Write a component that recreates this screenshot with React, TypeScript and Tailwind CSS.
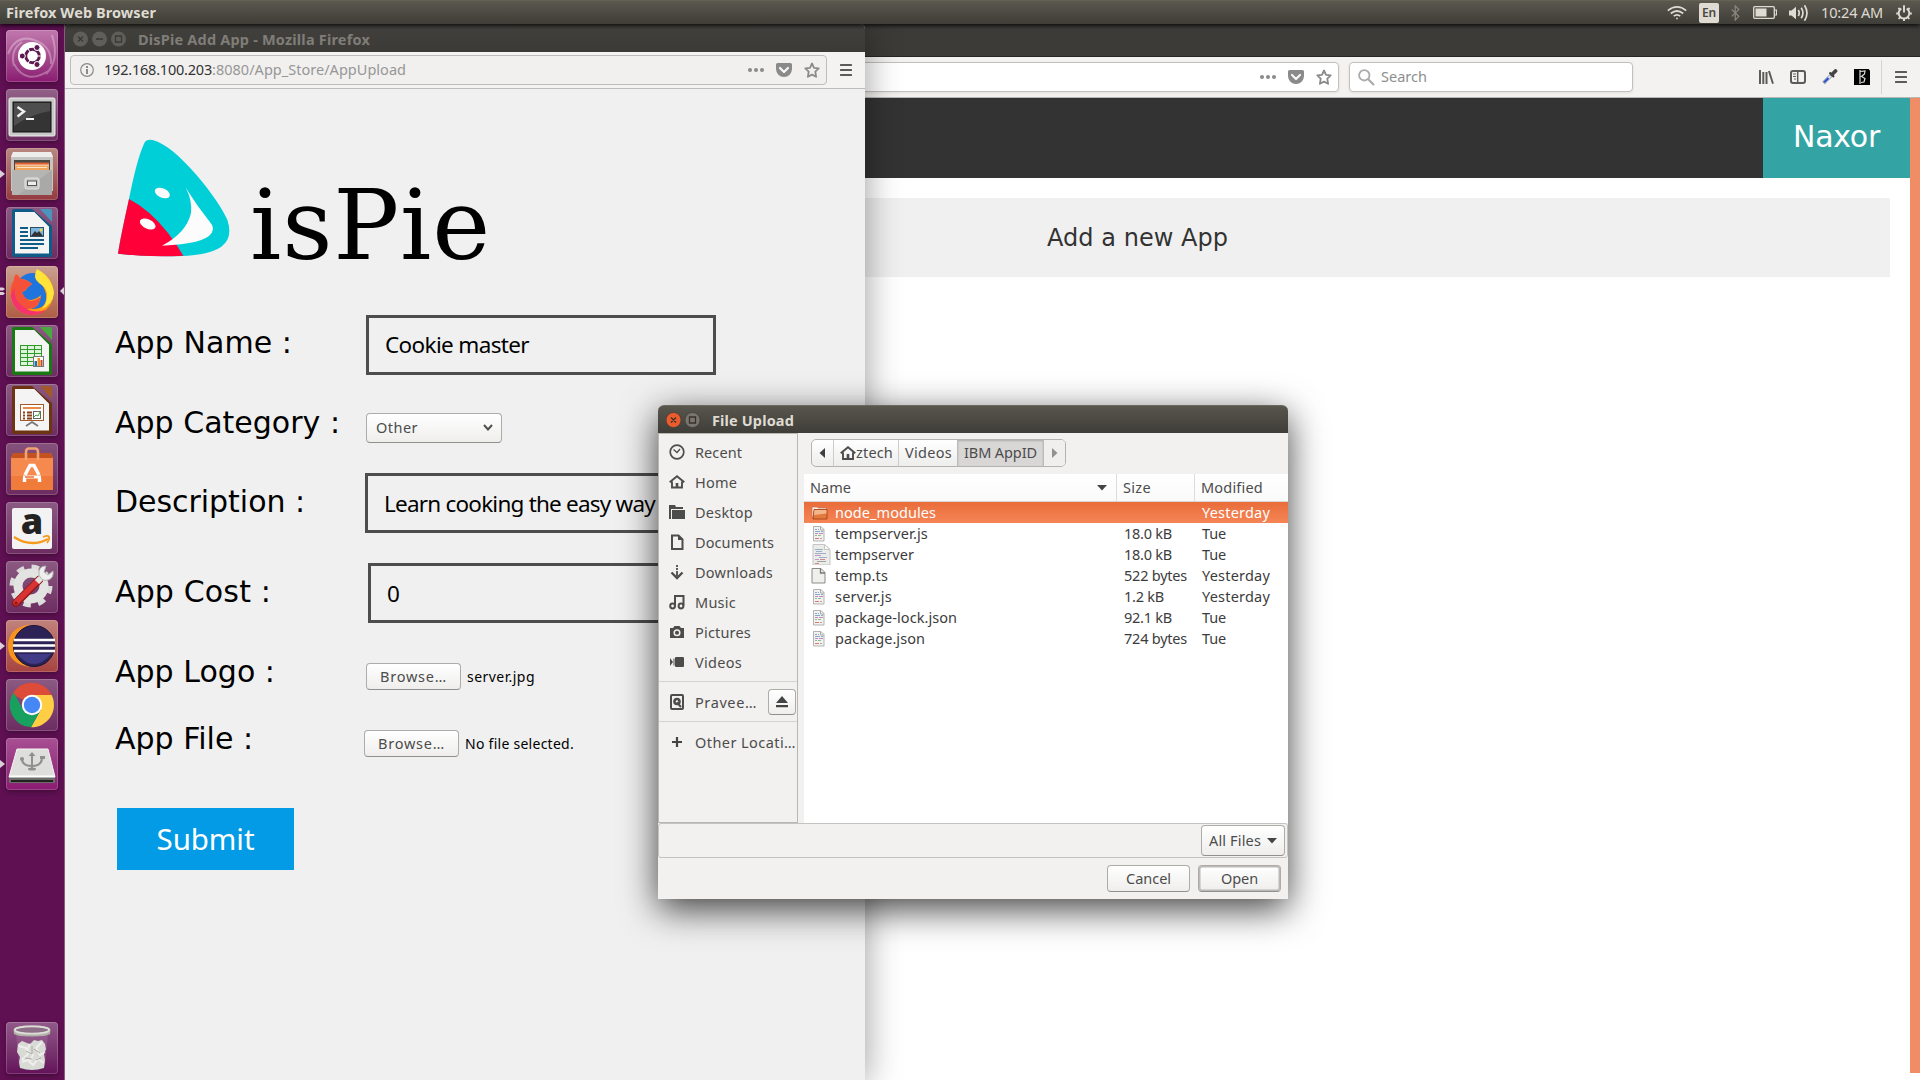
import { useLayoutEffect, useRef, useState } from "react";
import type { ReactNode } from "react";

/* Text run whose tracking is adjusted so that it occupies a given width. */
function T({ w, className = "", children }: { w: number; className?: string; children: string }) {
  const ref = useRef<HTMLSpanElement>(null);
  const [ls, setLs] = useState(0);
  useLayoutEffect(() => {
    if (ref.current) {
      const natural = ref.current.getBoundingClientRect().width;
      setLs((w - natural) / children.length);
    }
  }, []);
  return (
    <span ref={ref} className={`inline-block shrink-0 whitespace-pre ${className}`} style={{ letterSpacing: ls }}>
      {children}
    </span>
  );
}

/* ---------- small glyphs ---------- */

const Dots = ({ c = "#8a8a8a" }: { c?: string }) => (
  <svg width="16" height="16" viewBox="0 0 16 16" fill={c}>
    <circle cx="2" cy="8" r="2" /><circle cx="8" cy="8" r="2" /><circle cx="14" cy="8" r="2" />
  </svg>
);
const Pocket = () => (
  <svg width="16" height="16" viewBox="0 0 16 16">
    <path d="M1.500 1h13a1.500 1.500 0 0 1 1.500 1.500V7a8 8 0 0 1-16 0V2.500A1.500 1.500 0 0 1 1.500 1z" fill="#8a8a8a" />
    <path d="M4 6l4 4 4-4" fill="none" stroke="#f6f6f6" strokeWidth="2.200" strokeLinecap="round" strokeLinejoin="round" />
  </svg>
);
const Star = () => (
  <svg width="16" height="16" viewBox="0 0 16 16">
    <path d="M8 1.500l2 4.300 4.700.5-3.400 3.300.8 5.200L8 12.600l-4.100 2.200.8-5.200L1.300 6.300 6 5.800z" fill="none" stroke="#8a8a8a" strokeWidth="1.800" strokeLinejoin="round" />
  </svg>
);
const Burger = () => (
  <svg width="12" height="12" viewBox="0 0 12 12" fill="#5c5b59">
    <rect width="12" height="2" rx=".6" /><rect y="5" width="12" height="2" rx=".6" /><rect y="10" width="12" height="2" rx=".6" />
  </svg>
);
const HomeIcon = () => (
  <svg width="16" height="14" viewBox="0 0 16 14">
    <path d="M.7 7.200L8 1.200l7.300 6M3 6.500v6.500h10V6.500" fill="none" stroke="#4c4c4c" strokeWidth="1.900" />
    <path d="M6.700 8h2.600v5H6.700z" fill="#4c4c4c" />
  </svg>
);

/* ---------- panel ---------- */

function Panel() {
  return (
    <header className="relative z-20 flex h-6 items-center border-t border-[#656253] bg-linear-to-b from-[#5b584f] to-[#3e3d37] pl-[6px] text-[#dfdbd2] shadow-[0_2px_4px_rgba(0,0,0,0.75)]">
      <T w={150} className="pb-px text-[14.500px] leading-[20px] font-bold">Firefox Web Browser</T>
      <div className="ml-auto flex h-full items-center">
        <svg width="20" height="14" viewBox="0 0 20 14" fill="none" stroke="#dfdbd2" strokeWidth="1.700">
          <path d="M.8 4.600Q10-2.800 19.200 4.600M3.800 7.500Q10 2.500 16.200 7.500M6.700 10.200Q10 7.600 13.300 10.200" />
          <circle cx="10" cy="12.400" r=".9" fill="#dfdbd2" stroke="none" />
        </svg>
        <div className="ml-3 flex h-5 w-5 items-center justify-center rounded-[2px] bg-[#dfdbd2] text-[12px] font-semibold text-[#4a4842]">
          <T w={14}>En</T>
        </div>
        <svg className="ml-3" width="9" height="16" viewBox="0 0 9 16" fill="none" stroke="#8b887e" strokeWidth="1.200">
          <path d="M.8 4.500l7 6.800-3.600 3.800V.9l3.600 3.700-7 6.800" />
        </svg>
        <svg className="ml-[13px]" width="24" height="13" viewBox="0 0 24 13">
          <rect x=".7" y=".7" width="20.600" height="11.600" rx="1" fill="none" stroke="#dfdbd2" strokeWidth="1.300" />
          <rect x="2.500" y="2.500" width="11" height="8" fill="#dfdbd2" />
          <path d="M21.500 4h2v5h-2" fill="none" stroke="#dfdbd2" strokeWidth="1.200" />
        </svg>
        <svg className="ml-3" width="20" height="18" viewBox="0 0 20 18" fill="none" stroke="#dfdbd2">
          <path d="M0 6.500h2.500L7 2.800v12.400L2.500 11.500H0z" fill="#dfdbd2" stroke="none" />
          <path d="M9.300 6q1.800 3 0 6M12.200 3.700q3.500 5.300 0 10.600M15.500 1.300q5 7.700 0 15.400" strokeWidth="1.700" />
        </svg>
        <T w={62} className="ml-[12px] pb-px text-[14.500px] leading-[20px]">10:24 AM</T>
        <svg className="mr-2 ml-[13px]" width="16" height="16" viewBox="0 0 16 16" fill="none" stroke="#dfdbd2">
          <path d="M5.300 3.600a5.300 5.300 0 1 0 5.400 0" strokeWidth="1.900" />
          <path d="M8 .3v7.200M.2 8.500H2.500M13.500 8.500h2.300M2.400 3l1.700 1.600M13.600 3l-1.700 1.600M2.600 13.900l1.600-1.600M13.400 13.900l-1.600-1.600M8 13.600V16" strokeWidth="1.900" />
        </svg>
      </div>
    </header>
  );
}

/* ---------- launcher ---------- */

const LibreDoc = ({ edge, light, children }: { edge: string; light: string; children: ReactNode }) => (
  <>
    <path d="M8 2h18l20 17v29q0 2-2 2H8q-2 0-2-2V4q0-2 2-2z" fill={edge} />
    <path d="M34 2h10q2 0 2 2v11z" fill={light} />
    <path d="M9 5h19l15 15v26.500H9z" fill="#f4f4f4" />
    <path d="M28 5l15 15" stroke="#cfcfcf" strokeWidth="1" />
    {children}
  </>
);

const icons: { bg: string; art: ReactNode; run?: 1 | 2 }[] = [
  {
    bg: "bg-linear-to-b from-[#c078ad] to-[#8a1a72]",
    art: (
      <>
        <path d="M2 24Q10 4 28 10q18 6 17 24M46 5Q54 30 40 44M44 40Q20 56 8 34M8 36Q4 20 16 12" fill="none" stroke="#fff" strokeOpacity=".3" strokeWidth="2" />
        <circle cx="26" cy="26" r="14" fill="#fff" />
        <circle cx="26.500" cy="26" r="6.800" fill="none" stroke="#5e1a50" strokeWidth="3" />
        <path d="M26.500 26H37M26.500 26L21 35M26.500 26L21 17" stroke="#fff" strokeWidth="1" />
        <circle cx="31" cy="17.500" r="3" fill="#5e1a50" stroke="#fff" /><circle cx="31" cy="34.500" r="3" fill="#5e1a50" stroke="#fff" /><circle cx="16.300" cy="26" r="3" fill="#5e1a50" stroke="#fff" />
      </>
    ),
  },
  {
    bg: "bg-linear-to-b from-[#916087] to-[#6d2c61]",
    art: (
      <>
        <rect x="3" y="9" width="46" height="38" rx="1.500" fill="#c9c9c9" stroke="#eee" />
        <rect x="7" y="13" width="38" height="30" fill="#343434" stroke="#111" />
        <path d="M8 14h36v8Q25 25 8 37z" fill="#fff" fillOpacity=".13" />
        <path d="M11.500 18l6.500 4.500-6.500 5" fill="none" stroke="#f2f2f2" strokeWidth="2.400" />
        <path d="M20 30h8" stroke="#f2f2f2" strokeWidth="2" />
      </>
    ),
  },
  {
    bg: "bg-linear-to-b from-[#b98781] to-[#933a40]",
    run: 1,
    art: (
      <>
        <path d="M7 4h38l2 5v34H5V9z" fill="#c4c4c2" />
        <path d="M7 4h38l2 5H5z" fill="#ededeb" />
        <rect x="8" y="12" width="36" height="10" fill="#4a4844" />
        <path d="M9 14.500h34v3H9z" fill="#df6030" /><path d="M9 17h34v5H9z" fill="#f1a55a" /><path d="M9 17h34M11 19.500h30" stroke="#fff" strokeOpacity=".7" />
        <path d="M6 22h40v25H6z" fill="#a9a9a7" /><path d="M6 22h40l-34 25H6z" fill="#fff" fillOpacity=".15" />
        <rect x="19" y="30" width="14" height="11" rx="2" fill="#c7c7c5" stroke="#e8e8e6" /><rect x="21.500" y="33" width="9" height="4.500" fill="#eee" stroke="#555" />
      </>
    ),
  },
  {
    bg: "bg-linear-to-b from-[#8b5a82] to-[#6d2c61]",
    art: (
      <LibreDoc edge="#0f5c88" light="#4a94bd">
        <path d="M14 21h8M14 25h8M14 29h8M14 33h24M14 37h24M14 41h18" stroke="#0f5c88" strokeWidth="2" />
        <rect x="24.500" y="20.500" width="13" height="9" fill="#7cb6dc" stroke="#2a4f68" /><path d="M25 29l4-5 2 2 2-2 4 5z" fill="#333" /><circle cx="35" cy="23" r="1.500" fill="#f4d14a" />
      </LibreDoc>
    ),
  },
  {
    bg: "bg-linear-to-b from-[#caa090] to-[#ae5d43]",
    run: 2,
    art: (
      <>
        <circle cx="27" cy="25" r="18" fill="#1f74dd" />
        <path d="M30 4q12 4 15 12 4 8 2 16-4 15-20 17Q9 49 5 32 3 22 8 14q0-4 2-6 3 2 5 5 5 0 11 5l-5 4q0 2-5 4 2 8 9 8 6-1 10-5-1 12-10 14 17 1 15-15-2-8-6-11-4-6-4-13z" fill="#ff9a12" />
        <path d="M8 14q0-4 2-6 3 2 5 5 5 0 11 5l-5 4q0 2-5 4 3 8 9 9 6-1 10-4-3 13-14 12 8 6 19 1-7 6-15 5Q9 47 5 32 3 22 8 14z" fill="#f5503a" />
        <path d="M5 30q3 18 20 19 9 0 15-5Q24 49 14 38 7 32 9 22q-3 3-4 8z" fill="#f2336d" />
        <path d="M31 3q-5 9 2 14 8 5 8 12 0 10-7 15 13-5 14-17Q46 11 31 3z" fill="#ffe23a" />
      </>
    ),
  },
  {
    bg: "bg-linear-to-b from-[#8b5a82] to-[#6d2c61]",
    art: (
      <LibreDoc edge="#1a7a12" light="#49a840">
        <path d="M14 20h22v21H14z" fill="#2e9a27" />
        <g fill="#dff3dc">
          {[0, 1, 2, 3, 4].map((r) => [0, 1, 2].map((c) => <rect key={`${r}${c}`} x={15 + c * 7} y={21 + r * 4} width="6" height="3" />))}
        </g>
        <rect x="27.500" y="31.500" width="10" height="10" fill="#fff" stroke="#777" /><path d="M28.500 36h2.500v5h-2.500z" fill="#1b72b8" /><path d="M31.500 33h2.500v8h-2.500z" fill="#f08c1d" /><path d="M34.500 35h2v6h-2z" fill="#c5481b" />
      </LibreDoc>
    ),
  },
  {
    bg: "bg-linear-to-b from-[#8b5a82] to-[#6d2c61]",
    art: (
      <LibreDoc edge="#6d3412" light="#a3592a">
        <rect x="14.500" y="20.500" width="23" height="16" fill="#fff" stroke="#a3592a" />
        <path d="M17 24h18" stroke="#e88a4c" strokeWidth="2" /><path d="M17 28.500h2M17 31.500h2M17 34.500h2M21 28.500h5M21 31.500h5M21 34.500h5" stroke="#8b3f15" strokeWidth="1.800" />
        <rect x="27.500" y="27.500" width="7" height="7" fill="#fff" stroke="#666" /><path d="M28 33l2-2 2 1 2-4" stroke="#3aa02f" fill="none" />
        <path d="M20 42l6-4 6 4" fill="none" stroke="#777" strokeWidth="1.800" />
      </LibreDoc>
    ),
  },
  {
    bg: "bg-linear-to-b from-[#85517b] to-[#6d2c61]",
    art: (
      <>
        <path d="M7 10h38l2 5v32H5V15z" fill="#f07c3c" /><path d="M7 10h38l2 5H5z" fill="#c25320" /><path d="M5 15h42v18H5z" fill="#f68a4e" />
        <path d="M20 17V9q0-3.500 3-3.500h6q3 0 3 3.500v8" fill="none" stroke="#f2a276" strokeWidth="2.600" />
        <path d="M19 32l5-9.500h4l5 9.500M18.500 35v4M33.500 35v4" fill="none" stroke="#fff" strokeWidth="3.400" />
        <path d="M17 34h18" stroke="#fff" strokeWidth="3" /><path d="M19 34h9" stroke="#e8622a" strokeWidth="1.400" />
      </>
    ),
  },
  {
    bg: "bg-linear-to-b from-[#8b5a82] to-[#6d2c61]",
    art: (
      <>
        <rect x="6" y="6" width="40" height="41" rx="2" fill="#f3f3f3" />
        <text x="26" y="32" textAnchor="middle" fontFamily="Open Sans" fontWeight="800" fontSize="36" fill="#222">a</text>
        <path d="M8 35q17 11 34 2" fill="none" stroke="#f59a1c" strokeWidth="2.400" /><path d="M37 35q5-2 6 0t-2 6" fill="none" stroke="#f59a1c" strokeWidth="1.800" />
      </>
    ),
  },
  {
    bg: "bg-linear-to-b from-[#8b5a82] to-[#6d2c61]",
    art: (
      <>
        <circle cx="25" cy="25" r="18.500" fill="none" stroke="#dcdcda" strokeWidth="6" strokeDasharray="7.265 7.265" />
        <circle cx="25" cy="25" r="13" fill="none" stroke="#e3e3e1" strokeWidth="9" />
        <path d="M10 42L33 19" stroke="#8f1818" strokeWidth="8" strokeLinecap="round" /><path d="M10 41.500L32.500 19" stroke="#d93434" strokeWidth="5.500" strokeLinecap="round" />
        <path d="M31 21l5-5" stroke="#e4e4e2" strokeWidth="6" />
        <path d="M40 5q-8 0-7 9 3 7 9 5 6-2 5-9l-5 4-4-3z" fill="#eee" stroke="#b5b5b3" />
        <circle cx="10" cy="42" r="1.500" fill="#8a1414" />
      </>
    ),
  },
  {
    bg: "bg-linear-to-b from-[#c2827c] to-[#a64340]",
    run: 1,
    art: (
      <>
        <path d="M24 4Q2 8 2 26t22 21Q8 40 8 26T24 4z" fill="#f7941e" />
        <circle cx="28" cy="26" r="20.500" fill="#2c2255" stroke="#1b1538" />
        <path d="M11 34q17 20 34 0z" fill="#413a86" />
        <path d="M8 20h41M7 25.500h42M8 31h41" stroke="#fff" strokeWidth="2.400" />
      </>
    ),
  },
  {
    bg: "bg-linear-to-b from-[#8b5a82] to-[#6d2c61]",
    art: (
      <>
        <path d="M26 26L6.800 14.900A22.200 22.200 0 0 1 45.600 16z" fill="#dd4b39" /><path d="M5 18A22.200 22.200 0 0 1 45.500 16H26z" fill="#dd4b39" />
        <path d="M45.600 16A22.200 22.200 0 0 1 25 48.200L34.700 31 26 16z" fill="#ffce44" />
        <path d="M7.700 13.500A22.200 22.200 0 0 0 25 48.200L34.700 31 17.300 31z" fill="#17a05e" />
        <circle cx="26" cy="26" r="10.200" fill="#fff" /><circle cx="26" cy="26" r="8.200" fill="#4587f4" />
      </>
    ),
  },
  {
    bg: "bg-linear-to-b from-[#a84f93] to-[#8a1a72]",
    run: 1,
    art: (
      <>
        <path d="M11 11h31l7 28H3z" fill="#dededc" stroke="#f5f5f5" /><path d="M3 39h46v6H3z" fill="#6b6b69" /><path d="M3 38.500h46" stroke="#fff" strokeWidth="2" /><path d="M5 43h42" stroke="#222" strokeWidth="2" />
        <path d="M26 31V17M26 28q-9 0-10-6M26 28q9 0 10-7" fill="none" stroke="#8f8f8d" strokeWidth="2" />
        <ellipse cx="26" cy="31" rx="4" ry="1.500" fill="#8f8f8d" /><path d="M22.500 18l3.500-4 3.500 4z" fill="#8f8f8d" /><circle cx="16" cy="21" r="2" fill="#8f8f8d" /><path d="M34 18h5v3h-5z" fill="#8f8f8d" />
      </>
    ),
  },
];

function Tile({ bg, art, run }: { bg: string; art: ReactNode; run?: 1 | 2 }) {
  return (
    <div className="relative flex h-[52px] shrink-0 items-center pl-[6px]">
      {run === 1 && <div className="absolute top-[22px] left-0 h-0 w-0 border-y-[4px] border-l-[5px] border-y-transparent border-l-[#d9d0d8]" />}
      {run === 2 && (
        <svg className="absolute top-[21px] left-0" width="5" height="9" viewBox="0 0 5 9" fill="#d9d0d8">
          <path d="M0 .5h3l2 1.500-2 1.500H0zM0 5h3l2 1.500L3 8H0z" />
        </svg>
      )}
      <div className={`h-[52px] w-[52px] rounded-[4px] shadow-[inset_0_0_0_1px_rgba(255,255,255,0.18),0_2px_5px_rgba(0,0,0,0.3)] ${bg}`}>
        <svg className="overflow-visible" width="52" height="52" viewBox="0 0 52 52">{art}</svg>
      </div>
    </div>
  );
}

function Launcher() {
  return (
    <aside className="relative flex w-[65px] shrink-0 flex-col gap-[7px] border-r border-[#8a5a82] bg-[#5f1052] pt-[6px] pb-[6px]">
      {icons.map((i, n) => (
        <Tile key={n} {...i} />
      ))}
      <div className="absolute top-[263px] right-0 h-0 w-0 border-y-[4px] border-r-[4px] border-y-transparent border-r-[#d9d0d8]" />
      <div className="mt-auto">
        <Tile
          bg="bg-linear-to-b from-[#91598a] to-[#64115a]"
          art={
            <>
              <path d="M10 12l3 32q13 5 26 0l3-32z" fill="#fff" fillOpacity=".1" />
              <path d="M13 44q13 6 26 0v2q-13 4-26 0z" fill="#4a2a45" />
              <path d="M12 22l4-3 5 2 3 1 4-4 4 1 4-1 3 4 1 5-2 5 1 6-1 8q-12 4-24 0l-1-6 1-5-3-5z" fill="#d9dad5" />
              <path d="M13 24l7 2 2 6-6 6M24 22l-3 6 6 5-4 8M36 20l-6 6 4 7 5-3M16 40l6-2 5 5 5-6 6 4" fill="none" stroke="#fff" strokeWidth="2" strokeOpacity=".55" />
              <path d="M20 29l6 3M28 27l6 4M19 36l7 1M30 38l5-2M26 24v8" stroke="#a9aaa4" />
              <path d="M7.500 8q0-4.500 18.500-4.500T44.500 8L44 12q-3 2.500-18 2.500T8 12z" fill="#b3b3aa" />
              <ellipse cx="26" cy="8" rx="17" ry="3.600" fill="#8d6f88" stroke="#deded8" strokeWidth="1.800" />
            </>
          }
        />
      </div>
    </aside>
  );
}

/* ---------- store window behind ---------- */

function StoreWindow() {
  return (
    <section className="absolute inset-0 flex flex-col bg-white">
      <div className="h-8 shrink-0 bg-[#3c3b37]" />
      <div className="flex h-[42px] shrink-0 items-center border-t border-b border-t-[#262523] border-b-[#b9b7b5] bg-[#f3f2f0] pl-[600px]">
        <div className="flex h-[30px] w-[674px] items-center justify-end gap-3 rounded-[4px] border border-[#c2bfbd] bg-white pr-[6px] shadow-[0_1px_3px_rgba(0,0,0,0.08)]">
          <Dots /><Pocket /><Star />
        </div>
        <div className="ml-[10px] flex h-[30px] w-[284px] items-center rounded-[4px] border border-[#c2bfbd] bg-white pl-[8px] shadow-[0_1px_3px_rgba(0,0,0,0.08)]">
          <svg width="17" height="17" viewBox="0 0 17 17" fill="none" stroke="#aaa">
            <circle cx="6.300" cy="6.300" r="5.200" strokeWidth="1.800" /><path d="M10 10l6 6" strokeWidth="2.200" />
          </svg>
          <T w={46} className="ml-[6px] text-[14.500px] text-[#8e8e8e]">Search</T>
        </div>
        <svg className="ml-[126px]" width="15" height="14" viewBox="0 0 15 14" fill="#5c5b59">
          <path d="M0 0h2v14H0zM3.300 2h2v12h-2zM6.500 2h2v12h-2zM9 1.200l1.900-.5 4 12.700-1.800.6z" />
        </svg>
        <svg className="ml-[16px]" width="16" height="14" viewBox="0 0 16 14">
          <rect x="1" y="1" width="14" height="12" rx="2" fill="none" stroke="#5c5b59" strokeWidth="2" />
          <path d="M7.700 1v12" stroke="#5c5b59" strokeWidth="1.500" /><path d="M3 4h3M3 6.500h3M4 9h2" stroke="#5c5b59" />
        </svg>
        <svg className="ml-[16px]" width="16" height="16" viewBox="0 0 16 16">
          <path d="M1.500 14L9 6.500" stroke="#8c9299" strokeWidth="3.600" /><path d="M2.200 13.300L8.500 7" stroke="#dce6f4" strokeWidth="2.200" /><path d="M2.200 13.300L6.500 9" stroke="#2c4fd0" strokeWidth="2" />
          <path d="M7.500 3.500l4.500 4.500" stroke="#333" strokeWidth="2" /><path d="M10.500 5L13.500 2" stroke="#444" strokeWidth="3.800" strokeLinecap="round" />
        </svg>
        <svg className="ml-[16px]" width="16" height="16" viewBox="0 0 16 16">
          <path d="M0 0h14.500L16 1.500V16H0z" fill="#000" />
          <path d="M6 1v14M6 2.500l5-.5-.5 3-3 2.500 3.500 2-1 3.500-3 .5" fill="none" stroke="#ddd" strokeWidth="1.200" />
        </svg>
        <div className="ml-[11px] h-[34px] w-px bg-[#d6d4d2]" />
        <div className="ml-[13px]"><Burger /></div>
      </div>
      <div className="flex grow">
        <div className="flex grow flex-col">
          <div className="flex h-[80px] justify-end bg-[#333]">
            <div className="flex w-[147px] justify-center bg-[#33a3a3] font-['DejaVu_Sans'] text-[30px] leading-[77px] text-white">
              <T w={87}>Naxor</T>
            </div>
          </div>
          <div className="mt-5 mr-5 h-[79px] bg-[#f0f0f0] pl-[982px] font-['DejaVu_Sans'] text-[24px] leading-[81px] text-[#333]">
            <T w={181}>Add a new App</T>
          </div>
        </div>
        <div className="mb-[7px] w-[10px] bg-[#f08c66]" />
      </div>
    </section>
  );
}

/* ---------- form popup ---------- */

const btn = "rounded-[4px] border border-[#aeaca9] border-b-[#92908e] bg-linear-to-b from-white to-[#efeeed] text-[#4c4c4c]";

function Label({ w, lead, children }: { w: number; lead: string; children: string }) {
  return (
    <div className={`shrink-0 font-['DejaVu_Sans'] text-[30px] text-black ${lead}`}>
      <T w={w}>{children}</T>
    </div>
  );
}

function FormWindow() {
  return (
    <section className="absolute top-0 left-0 flex h-full w-[800px] flex-col rounded-t-[5px] bg-[#f0f0f0] shadow-[0_4px_36px_rgba(0,0,0,0.4)]">
      <div className="flex h-7 shrink-0 items-center rounded-t-[5px] bg-linear-to-b from-[#42413d] to-[#3b3a36] pt-px pl-2 text-[#807d78]">
        <svg width="54" height="16" viewBox="0 0 54 16">
          <circle cx="7.500" cy="8" r="7.500" fill="#605e58" /><circle cx="26.500" cy="8" r="7.500" fill="#605e58" /><circle cx="45.500" cy="8" r="7.500" fill="#605e58" />
          <path d="M5 5.500l5 5M10 5.500l-5 5M23 8h7M42.500 5h6v6h-6z" fill="none" stroke="#3a3935" strokeWidth="1.300" />
        </svg>
        <T w={232} className="ml-[11px] text-[14.500px] leading-5 font-bold">DisPie Add App - Mozilla Firefox</T>
      </div>
      <div className="flex h-[37px] shrink-0 items-center border-b border-[#bfbdbb] bg-[#f4f3f2] pl-[5px]">
        <div className="flex h-[30px] w-[757px] items-center rounded-[4px] border border-[#bfbdbb] bg-[#f1f0ef] pr-[6px] pl-[9px]">
          <svg width="14" height="14" viewBox="0 0 14 14">
            <circle cx="7" cy="7" r="6.300" fill="none" stroke="#8a8a8a" strokeWidth="1.200" /><path d="M6 3h2v2H6zM6 6h2v5H6z" fill="#8a8a8a" />
          </svg>
          <T w={108} className="ml-[10px] text-[14.500px] text-[#333]">192.168.100.203</T>
          <T w={194} className="text-[14.500px] text-[#979797]">:8080/App_Store/AppUpload</T>
          <div className="ml-auto flex gap-3"><Dots /><Pocket /><Star /></div>
        </div>
        <div className="ml-[13px]"><Burger /></div>
      </div>
      <div className="flex flex-col pl-[50px]">
        <div className="flex h-[226px] items-start pt-[50px] pl-[3px]">
          <svg width="112" height="118" viewBox="355 418 336 354">
            <path d="M355 762C362 715 375 660 388 598 400 540 415 470 434 430Q441 417 459 421C500 432 540 470 590 525 635 578 667 625 683 660Q701 715 665 741C640 758 600 766 550 769Q450 773 355 762z" fill="#00cfd8" />
            <path d="M388 598Q450 630 505 700 530 732 551 768 450 774 355 762 362 715 388 598z" fill="#ff0039" />
            <path d="M558 564Q592 618 633 670 645 684 636 700 615 733 487 738 560 700 574 640 578 600 558 564z" fill="#fcfcfc" />
            <ellipse cx="488" cy="580" rx="24" ry="14" transform="rotate(24 488 580)" fill="#fcfcfc" /><ellipse cx="444" cy="673" rx="25" ry="14" transform="rotate(24 444 673)" fill="#fcfcfc" />
          </svg>
          <div className="ml-[20px] pt-[36px] font-['DejaVu_Serif'] text-[98px] leading-[100px] text-black">
            <T w={241}>isPie</T>
          </div>
        </div>
        <div className="flex h-[60px]">
          <div className="w-[251px] shrink-0"><Label w={177} lead="leading-[56px]">App Name :</Label></div>
          <div className="flex w-[350px] items-center border-[3px] border-[#4d4d4d] pl-[16px] text-[22.500px] text-black"><T w={144}>Cookie master</T></div>
        </div>
        <div className="mt-[38px] flex h-[30px]">
          <div className="w-[251px] shrink-0"><Label w={225} lead="leading-[19px]">App Category :</Label></div>
          <div className={`flex w-[136px] items-center justify-between pr-2 pb-px pl-[9px] text-[14.500px] ${btn}`}>
            <T w={42}>Other</T>
            <svg width="10" height="7" viewBox="0 0 10 7"><path d="M1 1l4 4.500L9 1" fill="none" stroke="#4c4c4c" strokeWidth="1.900" /></svg>
          </div>
        </div>
        <div className="mt-[30px] flex h-[60px]">
          <div className="w-[250px] shrink-0"><Label w={190} lead="leading-[57px]">Description :</Label></div>
          <div className="flex w-[350px] items-center border-[3px] border-[#4d4d4d] pt-px pl-[16px] text-[22.500px] text-black"><T w={271}>Learn cooking the easy way</T></div>
        </div>
        <div className="mt-[30px] flex h-[60px]">
          <div className="w-[253px] shrink-0"><Label w={156} lead="leading-[57px]">App Cost :</Label></div>
          <div className="flex w-[350px] items-center border-[3px] border-[#4d4d4d] pt-px pl-[16px] text-[22.500px] text-black"><T w={13}>0</T></div>
        </div>
        <div className="mt-[40px] flex h-[27px] text-[14.500px]">
          <div className="w-[251px] shrink-0"><Label w={160} lead="leading-[17px]">App Logo :</Label></div>
          <div className={`flex w-[95px] items-center justify-center ${btn}`}><T w={67}>Browse…</T></div>
          <T w={68} className="ml-[6px] text-[14px] leading-[28px] text-black">server.jpg</T>
        </div>
        <div className="mt-[40px] flex h-[27px] text-[14.500px]">
          <div className="w-[249px] shrink-0"><Label w={138} lead="leading-[17px]">App File :</Label></div>
          <div className={`flex w-[95px] items-center justify-center ${btn}`}><T w={67}>Browse…</T></div>
          <T w={109} className="ml-[6px] text-[14px] leading-[28px] text-black">No file selected.</T>
        </div>
        <div className="mt-[51px] ml-[2px] flex h-[62px] w-[177px] justify-center bg-[#039be5] text-[29.500px] leading-[61px] text-white">
          <T w={98}>Submit</T>
        </div>
      </div>
    </section>
  );
}

/* ---------- file dialog ---------- */

const places: { label: string; w: number; icon: ReactNode }[] = [
  { label: "Recent", w: 47, icon: <><circle cx="8" cy="8" r="6.800" fill="none" stroke="#4c4c4c" strokeWidth="1.700" /><path d="M4.500 5.500L8 8.500l3-3.500" fill="none" stroke="#4c4c4c" strokeWidth="1.300" /></> },
  { label: "Home", w: 42, icon: <><path d="M.7 8.200L8 2.200l7.300 6M3 7.500v6h10v-6" fill="none" stroke="#4c4c4c" strokeWidth="1.900" /><path d="M6.700 9h2.600v5H6.700z" fill="#4c4c4c" /></> },
  { label: "Desktop", w: 58, icon: <><path d="M0 1h6l1 2h7v2H2v10H0z" fill="#4c4c4c" /><path d="M3 6h13v9H3z" fill="#4c4c4c" /></> },
  { label: "Documents", w: 79, icon: <><path d="M3 1.500h6.500l4 4v9.500H3z" fill="none" stroke="#4c4c4c" strokeWidth="2" /><path d="M9 1v5h5z" fill="#4c4c4c" /></> },
  { label: "Downloads", w: 78, icon: <><path d="M8 1v2M8 4v2M8 7v5" stroke="#4c4c4c" strokeWidth="1.800" /><path d="M2.500 8.500L8 14l5.500-5.500" fill="none" stroke="#4c4c4c" strokeWidth="2.300" /></> },
  { label: "Music", w: 41, icon: <><path d="M6 12V2h8.500v9.500" fill="none" stroke="#4c4c4c" strokeWidth="2" /><circle cx="3.600" cy="12" r="2.400" fill="none" stroke="#4c4c4c" strokeWidth="2" /><circle cx="12" cy="12" r="2.400" fill="none" stroke="#4c4c4c" strokeWidth="2" /></> },
  { label: "Pictures", w: 56, icon: <><path d="M1 4h3l1.500-2h5L12 4h3v10H1z" fill="#4c4c4c" /><circle cx="8" cy="8.800" r="2.800" fill="#4c4c4c" stroke="#f1f0ee" strokeWidth="1.500" /></> },
  { label: "Videos", w: 47, icon: <path d="M1 4l3 4-3 4zM4.500 4.500h1v7h-1zM6 4q0-1 1-1h7q1 0 1 1v8q0 1-1 1H7q-1 0-1-1z" fill="#4c4c4c" /> },
];

const files: [string, number, string, number, string, number, string][] = [
  ["node_modules", 101, "", 0, "Yesterday", 68, "folder"],
  ["tempserver.js", 93, "18.0 kB", 48, "Tue", 24, "js"],
  ["tempserver", 79, "18.0 kB", 48, "Tue", 24, "big"],
  ["temp.ts", 53, "522 bytes", 63, "Yesterday", 68, "blank"],
  ["server.js", 57, "1.2 kB", 40, "Yesterday", 68, "js"],
  ["package-lock.json", 122, "92.1 kB", 48, "Tue", 24, "js"],
  ["package.json", 90, "724 bytes", 63, "Tue", 24, "js"],
];

function FileIcon({ kind }: { kind: string }) {
  if (kind === "folder")
    return (
      <svg width="20" height="20" viewBox="0 0 20 20">
        <path d="M1 4h5l1.500 1h8V14H1z" fill="#fbeee6" stroke="#b9694a" strokeWidth=".6" />
        <path d="M3 6.500h13v9.500H2z" fill="#e27a3d" stroke="#a8441a" strokeWidth=".9" /><path d="M3.500 7h12v3.500L3 12z" fill="#f9c9a6" fillOpacity=".75" />
      </svg>
    );
  if (kind === "blank")
    return (
      <svg width="20" height="20" viewBox="0 0 20 20">
        <path d="M1 2.500h9l4 4v10.500H1z" fill="#efefee" stroke="#8b8b89" /><path d="M9.500 2.500v4.500H14" fill="none" stroke="#777" strokeWidth="1.300" />
      </svg>
    );
  if (kind === "big")
    return (
      <svg width="20" height="21" viewBox="0 0 20 21">
        <path d="M2 .5h11.500l5.500 5V21H2z" fill="#ebebea" stroke="#c5c5c3" />
        <path d="M13.500.5v5H19z" fill="#fafafa" stroke="#c5c5c3" />
        <g strokeOpacity=".75">
          <path d="M4 5.500h8M5 7.500h6M4 9.500h11M8 13.500h8" stroke="#7f9cc0" /><path d="M4 11.500h6M4 15.500h4" stroke="#b07fc0" /><path d="M9 15.500h5M4 19.500h4" stroke="#c66" /><path d="M6 17.500h9" stroke="#888" />
        </g>
      </svg>
    );
  return (
    <svg width="20" height="20" viewBox="0 0 20 20">
      <path d="M2.500 2.500h7.500l3 3v11.500H2.500z" fill="#f1f1f0" stroke="#b3b3b1" /><path d="M9.500 2.500v3.500h3.500" fill="none" stroke="#aaa" />
      <g strokeOpacity=".8">
        <path d="M4 5.500h2M7 5.500h1M4 7.500h5M10 7.500h2" stroke="#6f93c2" /><path d="M4 9.500h3M8 9.500h4" stroke="#b06fb8" /><path d="M4 11.500h2M7 11.500h3" stroke="#74b06e" /><path d="M4 14.500h4" stroke="#d55" /><path d="M9 14.500h2" stroke="#999" />
      </g>
    </svg>
  );
}

function Dialog() {
  return (
    <section className="absolute top-[381px] left-[593px] flex h-[494px] w-[630px] flex-col rounded-t-[6px] bg-[#f2f1ef] text-[14.500px] text-[#4c4c4c] shadow-[0_10px_36px_rgba(0,0,0,0.75)]">
      <div className="flex h-7 shrink-0 items-center rounded-t-[6px] border-t border-[#6a685f] bg-linear-to-b from-[#58564d] to-[#3e3d38] pl-2 text-[#dfdbd2]">
        <svg width="36" height="16" viewBox="0 0 36 16">
          <circle cx="7.500" cy="8" r="7.500" fill="#eb5b2e" stroke="#38372f" strokeWidth=".6" /><circle cx="26.500" cy="8" r="7.500" fill="#78766e" stroke="#38372f" strokeWidth=".6" />
          <path d="M5 5.500l5 5M10 5.500l-5 5M23.500 5h6v6h-6z" fill="none" stroke="#3a3029" strokeWidth="1.300" />
        </svg>
        <T w={82} className="ml-[10px] leading-5 font-bold">File Upload</T>
      </div>
      <div className="flex h-[390px] shrink-0">
        <div className="flex w-[140px] shrink-0 flex-col border border-[#b9b7b4] pt-[3px] leading-[30px]">
          {places.map((p) => (
            <div key={p.label} className="flex h-[30px] items-center pl-[10px]">
              <svg width="16" height="16" viewBox="0 0 16 16">{p.icon}</svg>
              <T w={p.w} className="ml-[10px]">{p.label}</T>
            </div>
          ))}
          <div className="mt-[4px] h-px bg-[#d5d3d0]" />
          <div className="flex h-[39px] items-center pl-[10px]">
            <svg width="16" height="16" viewBox="0 0 16 16">
              <rect x="2" y="1" width="12" height="14" rx="1" fill="none" stroke="#4c4c4c" strokeWidth="2" /><circle cx="8" cy="7.500" r="3.800" fill="#4c4c4c" /><circle cx="8" cy="7.500" r="1.200" fill="#f1f0ee" /><path d="M8 8.500l4 4.500" stroke="#4c4c4c" strokeWidth="2" />
            </svg>
            <T w={62} className="ml-[10px]">Pravee…</T>
            <div className={`ml-[11px] flex h-[26px] w-[28px] shrink-0 items-center justify-center ${btn}`}>
              <svg width="14" height="12" viewBox="0 0 14 12" fill="#444"><path d="M7 0l6 7H1zM1 9h12v2.200H1z" /></svg>
            </div>
          </div>
          <div className="h-px bg-[#d5d3d0]" />
          <div className="mt-[5px] flex h-[30px] items-center pl-[10px]">
            <svg width="16" height="16" viewBox="0 0 16 16"><path d="M8 3v10M3 8h10" stroke="#444" strokeWidth="2.200" /></svg>
            <T w={101} className="ml-[10px]">Other Locati…</T>
          </div>
        </div>
        <div className="flex grow flex-col pl-[6px]">
          <div className="flex h-[41px] shrink-0 items-start pt-[6px] pl-[7px]">
            <div className="flex h-[28px] overflow-hidden rounded-[5px] border border-[#b5b3b0] bg-linear-to-b from-white to-[#ededec]">
              <div className="flex w-[22px] items-center justify-center border-r border-[#cfcdca] pr-px">
                <svg width="6" height="10" viewBox="0 0 6 10" fill="#3f3f3f"><path d="M6 0v10L.5 5z" /></svg>
              </div>
              <div className="flex w-[65px] items-center border-r border-[#cfcdca] pl-[6px]"><HomeIcon /><T w={37}>ztech</T></div>
              <div className="flex w-[59px] items-center justify-center border-r border-[#bbb] pl-px"><T w={47}>Videos</T></div>
              <div className="flex w-[86px] items-center justify-center border-r border-[#bbb] bg-[#d8d7d6] shadow-[inset_0_1px_2px_rgba(0,0,0,0.2)]"><T w={73}>IBM AppID</T></div>
              <div className="flex w-[21px] items-center justify-center bg-[#f0efee]">
                <svg width="6" height="10" viewBox="0 0 6 10" fill="#949290"><path d="M0 0v10l5.500-5z" /></svg>
              </div>
            </div>
          </div>
          <div className="flex h-[28px] shrink-0 items-center border-b border-[#d9d7d5] bg-linear-to-b from-white to-[#fafafa]">
            <div className="flex h-full w-[313px] items-center border-r border-[#dedcda] pr-[9px] pl-[6px]">
              <T w={41}>Name</T>
              <svg className="ml-auto" width="10" height="6" viewBox="0 0 10 6" fill="#444"><path d="M0 0h10L5 5.500z" /></svg>
            </div>
            <div className="flex h-full w-[78px] items-center border-r border-[#dedcda] pl-[6px]"><T w={28}>Size</T></div>
            <div className="flex h-full items-center pl-[6px]"><T w={62}>Modified</T></div>
          </div>
          <div className="grow bg-white">
            {files.map(([n, nw, s, sw, m, mw, k], i) => (
              <div key={n} className={`flex h-[21px] items-center pl-[7px] leading-[21px] ${i === 0 ? "bg-linear-to-b from-[#e96c3a] to-[#f58556] text-white" : "text-[#3c3c3c]"}`}>
                <FileIcon kind={k} />
                <div className="ml-[4px] w-[289px]"><T w={nw}>{n}</T></div>
                <div className="w-[78px]">{s && <T w={sw}>{s}</T>}</div>
                <T w={mw}>{m}</T>
              </div>
            ))}
          </div>
        </div>
      </div>
      <div className="flex h-[35px] shrink-0 items-center justify-end rounded-[3px] border border-[#c5c3c0] pr-[2px]">
        <div className={`flex h-[31px] w-[84px] items-center justify-center gap-[6px] ${btn}`}>
          <T w={52}>All Files</T>
          <svg width="10" height="6" viewBox="0 0 10 6" fill="#444"><path d="M0 0h10L5 5.500z" /></svg>
        </div>
      </div>
      <div className="flex grow items-center justify-end gap-[8px] pr-[7px]">
        <div className={`flex h-[27px] w-[83px] items-center justify-center ${btn}`}><T w={45}>Cancel</T></div>
        <div className={`flex h-[27px] w-[83px] items-center justify-center shadow-[inset_0_0_0_1.500px_#bbb9b6] ${btn}`}><T w={37}>Open</T></div>
      </div>
    </section>
  );
}

export default function App() {
  return (
    <div className="flex h-[1080px] w-[1920px] flex-col overflow-hidden bg-white font-['Noto_Sans',sans-serif]">
      <Panel />
      <div className="flex grow">
        <Launcher />
        <main className="relative grow overflow-hidden">
          <StoreWindow />
          <FormWindow />
          <Dialog />
        </main>
      </div>
    </div>
  );
}
